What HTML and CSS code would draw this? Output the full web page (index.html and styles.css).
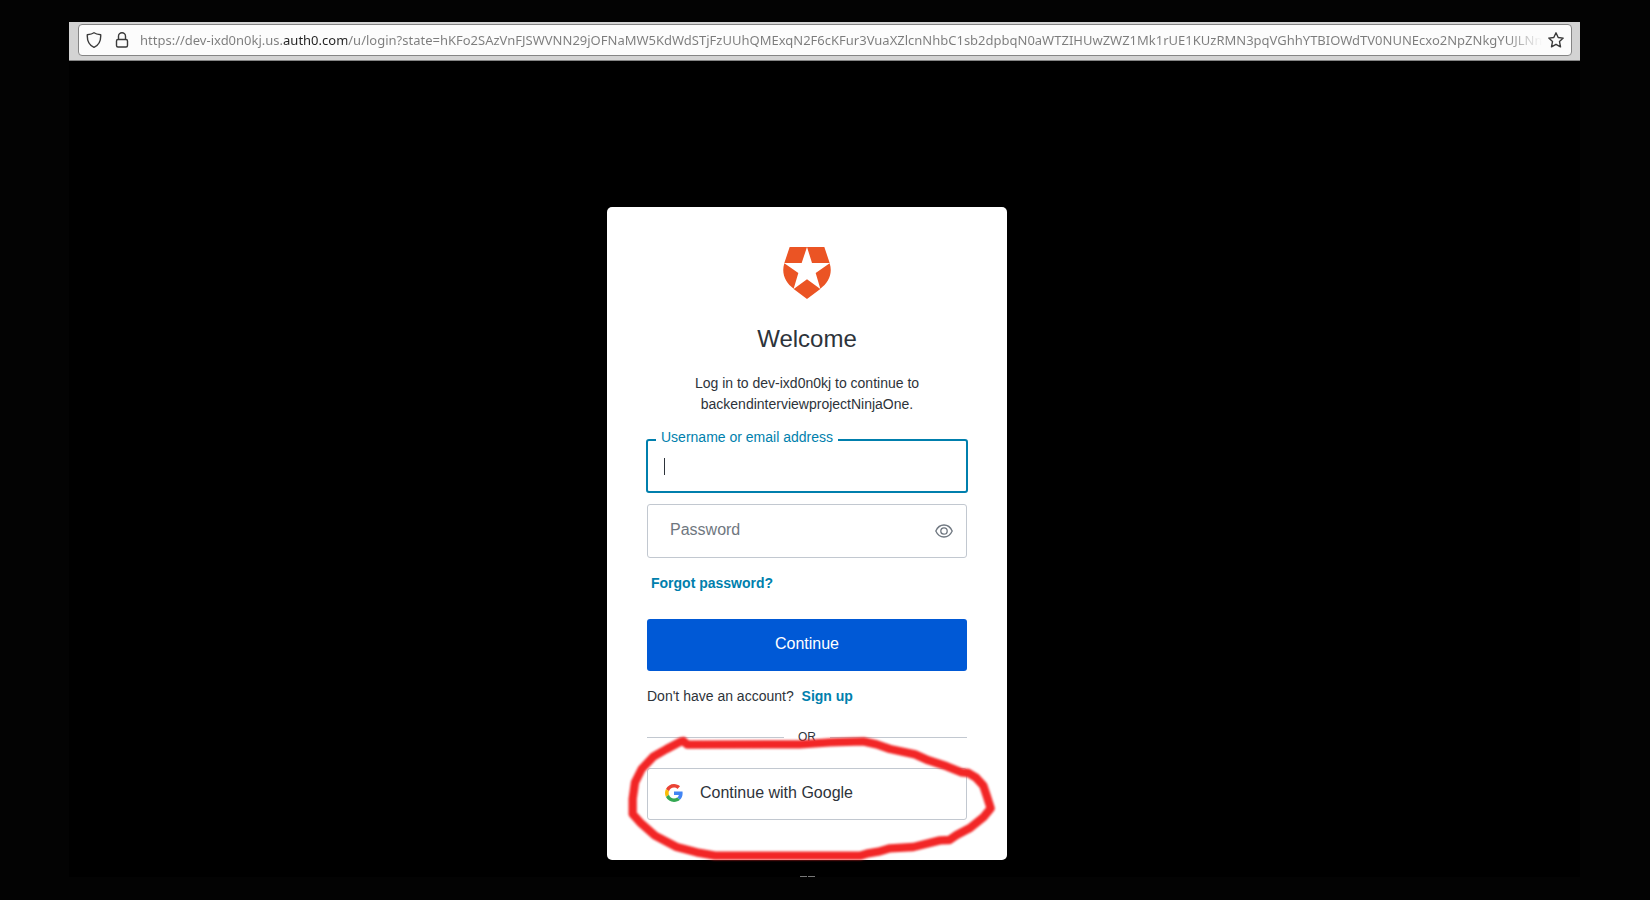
FILE: index.html
```html
<!DOCTYPE html>
<html lang="en">
<head>
<meta charset="utf-8">
<title>Log in</title>
<link rel="stylesheet" href="styles.css">
</head>
<body>
<div class="window">
  <header class="toolbar">
    <div class="urlbar">
      <svg class="urlbar-icon" viewBox="0 0 16 16" aria-hidden="true"><path d="M8 .8C6.300 2 4 2.500 1.300 2.800 1 8.500 3.200 13.200 8 15.300 12.800 13.200 15 8.500 14.700 2.800 12 2.500 9.700 2 8 .8z"/></svg>
      <svg class="urlbar-icon lock" viewBox="0 0 16 16" aria-hidden="true"><rect x="2.500" y="7.500" width="11" height="7.500" rx="1.500"/><path d="M4.500 7.500V4.200a3.500 3.500 0 0 1 7 0V7.500"/></svg>
      <input class="url" type="text" aria-label="Address" value="https://dev-ixd0n0kj.us.auth0.com/u/login?state=hKFo2SAzVnFJSWVNN29jOFNaMW5KdWdSTjFzUUhQMExqN2F6cKFur3VuaXZlcnNhbC1sb2dpbqN0aWTZIHUwZWZ1Mk1rUE1KUzRMN3pqVGhhYTBIOWdTV0NUNEcxo2NpZNkgYUJLNmpBOHF">
      <button class="star" type="button" aria-label="Bookmark this page"><svg class="urlbar-icon" viewBox="0 0 16 16" aria-hidden="true"><path d="M8 .8l2.200 4.700 5 .6-3.700 3.500 1 5.200L8 12.300l-4.500 2.500 1-5.200L.8 6.100l5-.6z"/></svg></button>
    </div>
  </header>
  <main class="page">
    <section class="card">
      <svg class="logo" viewBox="0 0 144 156" role="img" aria-label="Auth0"><path d="M20 0H72L56 48H4zM72 0H124L140 48H87zM4 49L46 78 32 125C8 108-6 80 4 49zM140 49L98 78 112 125C136 108 150 80 140 49zM72 97L112 126 72 156 32 126z"/></svg>
      <h1 class="title">Welcome</h1>
      <p class="intro">Log in to dev-ixd0n0kj to continue to backendinterviewprojectNinjaOne.</p>
      <form class="form">
        <div class="field focused">
          <label class="floating" for="username">Username or email address</label>
          <input class="input" id="username" type="text">
          <span class="caret"></span>
        </div>
        <div class="field">
          <input class="input password" type="password" placeholder="Password" aria-label="Password">
          <button class="reveal" type="button" aria-label="Show password"><svg class="eye" viewBox="0 0 18 14" aria-hidden="true"><path d="M.8 7C2.500 3.200 5.400 1 9 1s6.500 2.200 8.200 6C15.500 10.800 12.600 13 9 13S2.500 10.800.8 7z"/><circle cx="9" cy="7" r="3.200"/></svg></button>
        </div>
        <a class="link forgot" href="#">Forgot password?</a>
        <button class="submit" type="submit">Continue</button>
      </form>
      <p class="signup">Don't have an account? <a class="link" href="#">Sign up</a></p>
      <div class="divider">OR</div>
      <div class="social">
        <button class="google" type="button">
          <svg class="google-icon" viewBox="0 0 48 48" aria-hidden="true"><path fill="#EA4335" d="M24 9.500c3.540 0 6.710 1.220 9.210 3.600l6.850-6.850C35.900 2.380 30.470 0 24 0 14.620 0 6.510 5.380 2.560 13.220l7.980 6.190C12.430 13.720 17.740 9.500 24 9.500z"/><path fill="#4285F4" d="M46.980 24.550c0-1.570-.15-3.090-.38-4.550H24v9.020h12.940c-.58 2.960-2.260 5.480-4.780 7.180l7.730 6c4.510-4.180 7.090-10.360 7.090-17.650z"/><path fill="#FBBC05" d="M10.530 28.590c-.48-1.450-.76-2.990-.76-4.590s.27-3.140.76-4.590l-7.980-6.190C.92 16.460 0 20.120 0 24s.92 7.540 2.560 10.780l7.970-6.190z"/><path fill="#34A853" d="M24 48c6.480 0 11.930-2.130 15.890-5.810l-7.730-6c-2.150 1.450-4.920 2.300-8.160 2.300-6.260 0-11.570-4.220-13.470-9.910l-7.980 6.190C6.510 42.620 14.620 48 24 48z"/></svg>
          Continue with Google
        </button>
        <svg class="marker" viewBox="0 0 1260 510" aria-hidden="true"><path d="M242 68L250 66 262 77 600 76 690 70 790 67 830 76 870 90 945 106 985 124 1040 142 1085 160 1105 162 1128 176 1150 200 1160 230 1172 268 1150 295 1110 327 1070 348 1048 363 1020 364 940 384 870 388 835 398 800 404 780 410 345 410 290 400 230 384 165 350 120 310 98 285 98 240 105 190 125 150 160 113 200 90z"/></svg>
      </div>
    </section>
    <div class="footmark"></div>
  </main>
</div>
</body>
</html>
```
FILE: styles.css
```css
* {
  box-sizing: border-box;
}

body {
  margin: 0;
  background: #030303;
  color: #2d333a;
  font: 14px/21px "Liberation Sans", Arial, sans-serif;
}

button,
input {
  font-family: inherit;
}

.window {
  margin: 22px 70px 22px 69px;
  background: #000;
}

.toolbar {
  padding: 2px 8px 4px 9px;
  background: #d3d3d3;
  border-bottom: 1px solid #858585;
}

.urlbar {
  display: flex;
  align-items: center;
  height: 32px;
  padding: 0 7px;
  background: #fcfcfc;
  border: 1px solid #858585;
  border-radius: 4px;
}

.urlbar-icon {
  display: block;
  flex: none;
  width: 16px;
  height: 16px;
  fill: none;
  stroke: #3a3a3a;
  stroke-width: 1.4;
  stroke-linejoin: round;
}

.lock {
  margin-left: 12px;
}

.url {
  flex: 1;
  min-width: 0;
  height: 24px;
  margin: 0 6px 0 10px;
  padding: 0;
  border: 0;
  outline: 0;
  font: 13px/24px "Noto Sans", sans-serif;
  color: #7c7c7c;
  background: linear-gradient(90deg, #7c7c7c 142px, #222 142px, #222 207px, #7c7c7c 207px, #7c7c7c calc(100% - 36px), transparent);
  background-clip: text;
  -webkit-background-clip: text;
  -webkit-text-fill-color: transparent;
}

.star {
  padding: 0;
  border: 0;
  background: none;
}

.page {
  display: flex;
  flex-direction: column;
  align-items: center;
  padding: 146px 35px 0 0;
}

.card {
  width: 400px;
  padding: 40px;
  background: #fff;
  border-radius: 5px;
}

.logo {
  display: block;
  width: 48px;
  height: 52px;
  margin: 0 auto;
  fill: #eb5424;
}

.title {
  margin: 25px 0 19px;
  font-size: 24px;
  line-height: 30px;
  font-weight: 400;
  text-align: center;
}

.intro {
  margin: 0 0 24px;
  padding: 0 40px;
  text-align: center;
}

.form {
  display: flex;
  flex-direction: column;
}

.field {
  position: relative;
  display: flex;
  height: 54px;
  border: 1px solid #c2c8d0;
  border-radius: 3px;
}

.focused {
  margin: 0 -1px 11px;
  border: 2px solid #007fad;
}

.input {
  flex: 1;
  min-width: 0;
  padding: 0 16px;
  border: 0;
  outline: 0;
  background: none;
  font-size: 16px;
  color: #2d333a;
}

.password {
  padding: 0 22px 2px;
}

.input::placeholder {
  color: #6f7780;
}

.floating {
  position: absolute;
  top: -14px;
  left: 8px;
  padding: 0 5px;
  background: #fff;
  color: #007fad;
}

.caret {
  position: absolute;
  top: 17px;
  left: 16px;
  width: 1px;
  height: 17px;
  background: #2d333a;
}

.reveal {
  padding: 0 13px;
  border: 0;
  background: none;
}

.eye {
  display: block;
  width: 18px;
  height: 14px;
  fill: none;
  stroke: #6f7780;
  stroke-width: 1.3;
}

.link {
  color: #007fad;
  font-weight: 700;
  text-decoration: none;
}

.forgot {
  align-self: flex-start;
  margin: 15px 4px 25px;
}

.submit {
  height: 52px;
  padding: 0 0 2px;
  border: 0;
  border-radius: 3px;
  background: #0059d6;
  color: #fff;
  font-size: 16px;
}

.signup {
  margin: 15px 0 21px;
}

.signup .link {
  margin-left: 4px;
}

.divider {
  display: flex;
  align-items: center;
  gap: 14px;
  margin-bottom: 22px;
  font-size: 12px;
  line-height: 18px;
}

.divider::before,
.divider::after {
  content: "";
  flex: 1;
  height: 1px;
  background: #c2c8d0;
}

.social {
  position: relative;
}

.google {
  display: flex;
  align-items: center;
  gap: 17px;
  width: 100%;
  height: 52px;
  padding: 0 17px 2px;
  border: 1px solid #c2c8d0;
  border-radius: 3px;
  background: #fff;
  color: #2d333a;
  font-size: 16px;
}

.google-icon {
  width: 18px;
  height: 18px;
}

.marker {
  position: absolute;
  top: -49px;
  left: -47px;
  width: 420px;
  height: 170px;
  fill: none;
  stroke: #f22626;
  stroke-width: 25;
  stroke-linejoin: round;
  filter: blur(1px);
  pointer-events: none;
}

.footmark {
  width: 15px;
  height: 1px;
  margin-top: 16px;
  background: linear-gradient(90deg, #777 7px, #000 7px, #000 8px, #777 8px);
}
```
